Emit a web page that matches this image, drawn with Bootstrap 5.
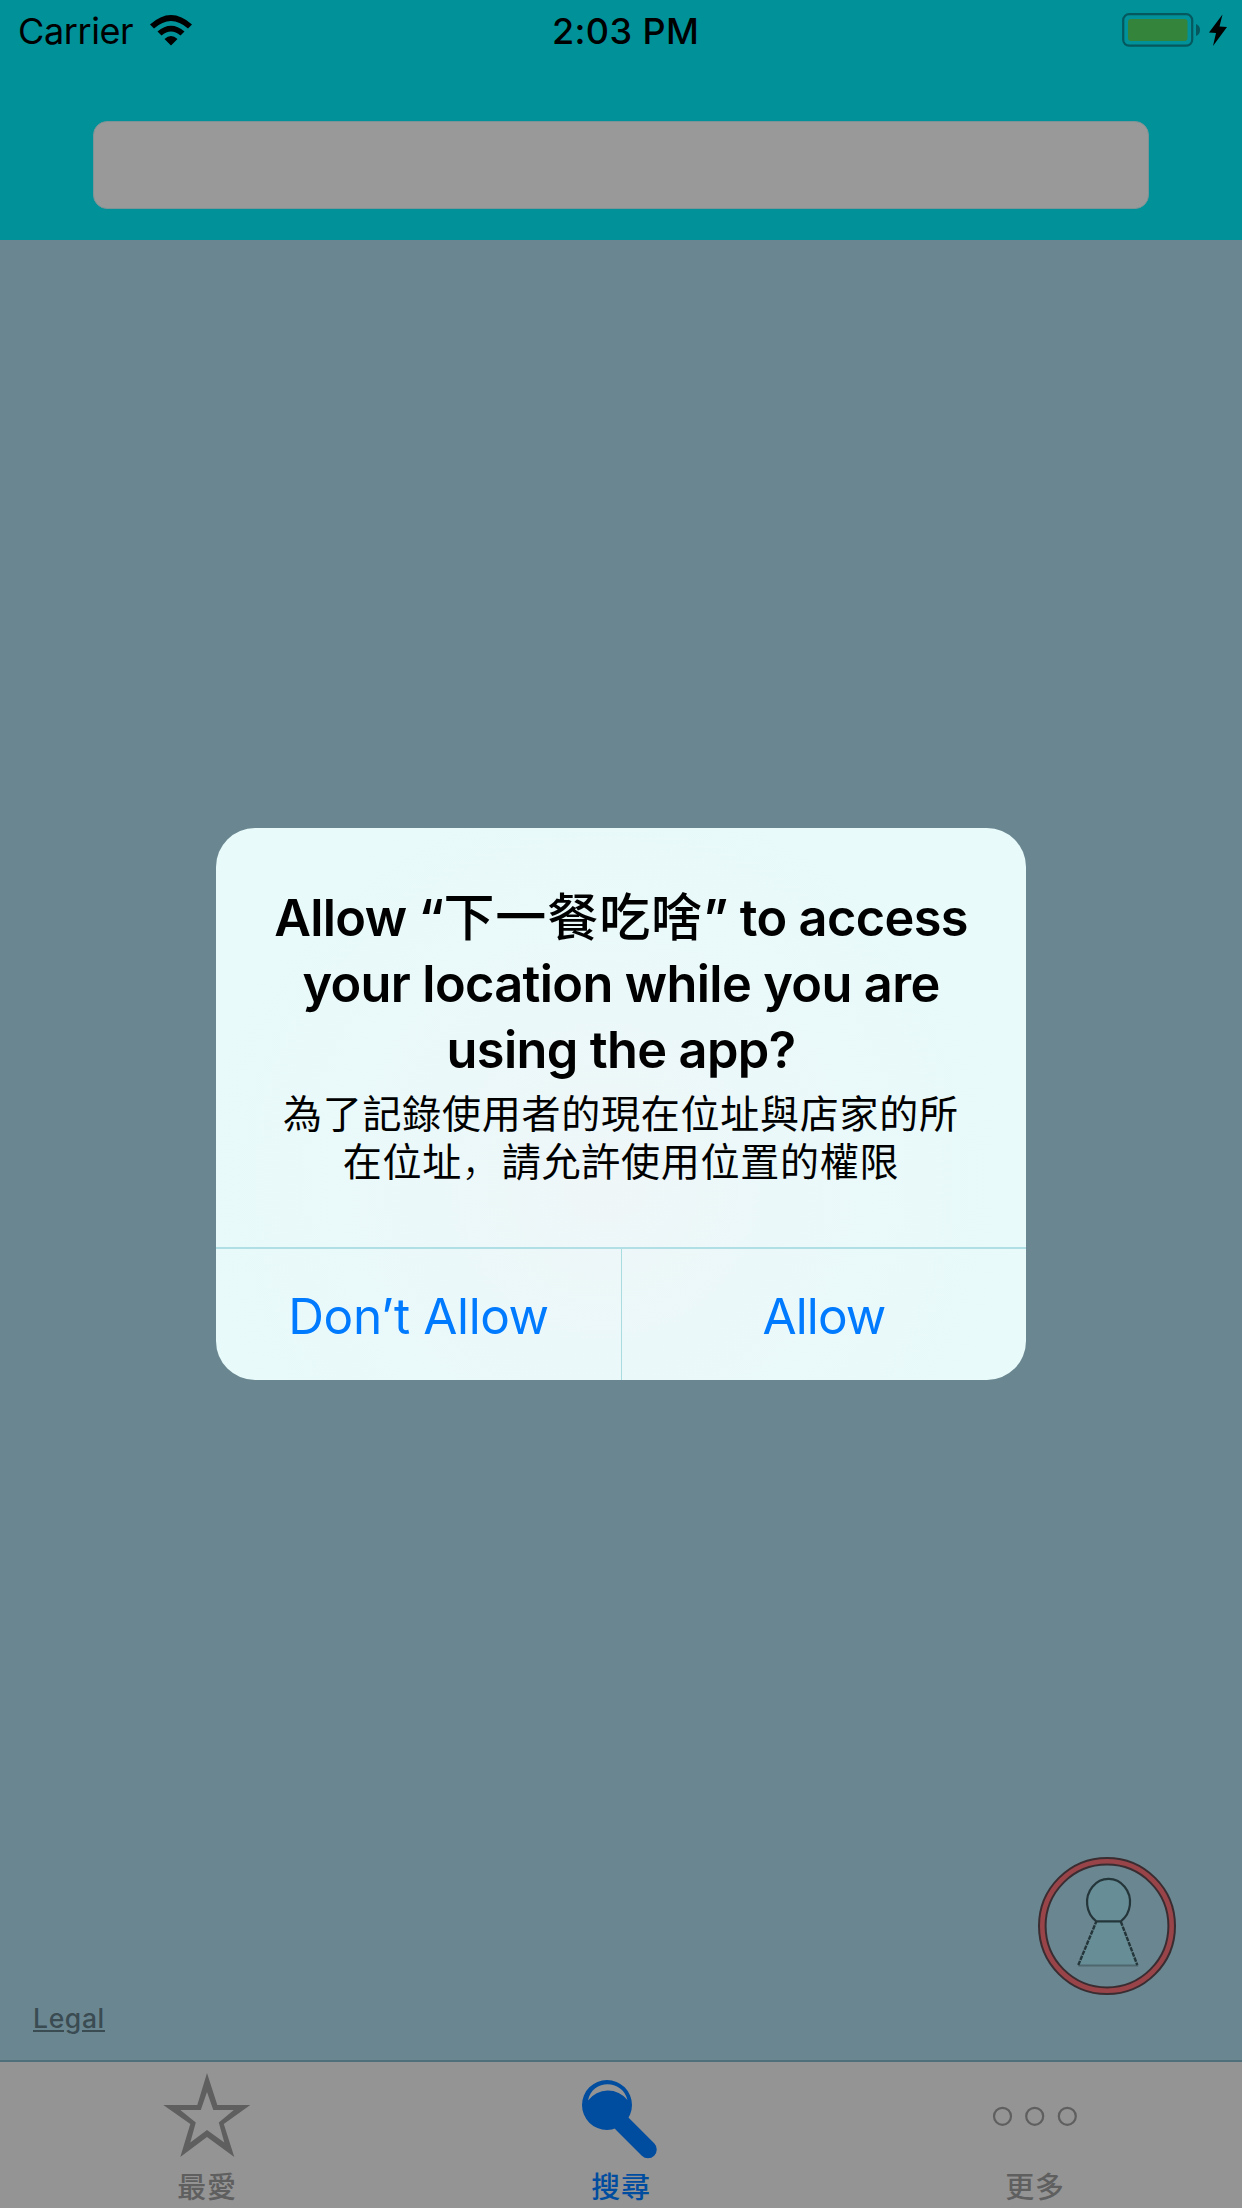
<!DOCTYPE html>
<html lang="zh-Hant">
<head>
<meta charset="utf-8">
<meta name="viewport" content="width=device-width, initial-scale=1">
<title>Location permission</title>
<link href="https://cdn.jsdelivr.net/npm/bootstrap@5.3.0/dist/css/bootstrap.min.css" rel="stylesheet">
<style>
  body { font-family: Inter, "Noto Sans CJK TC", sans-serif; color: #000; background: #6a8791; }
  svg { display: block; }
  .phone { width: 1242px; height: 2208px; }
  .app-top { height: 240px; background: #009199; }
  .status { height: 62px; padding: 0 14px 0 18px; font-size: 36px; line-height: 62px; }
  .status > * { flex: 1 1 0; }
  .status svg { margin-bottom: 2px; }
  .carrier { letter-spacing: -.4px; }
  .wifi { margin-left: 16px; }
  .clock { font-weight: 500; letter-spacing: .4px; padding-left: 5px; }
  .search-field { margin: 59px 93px 0; height: 88px; border-radius: 14px; background: #999; border: 1px solid #7c9496; }
  .map-area { background: #6a8791; }
  .me-button { right: 66px; bottom: 65px; }
  .legal { left: 33px; bottom: 22px; font-size: 26.5px; line-height: 40px; font-weight: 500; letter-spacing: .65px; color: #3a4b52; text-decoration-thickness: 3px; text-underline-offset: 2px; }
  .tabs-bottom { height: 148px; background: #949494; border-top: 2px solid #4f6f7a; color: #5f5f5f; }
  .tab-item { padding-top: 8px; }
  .tab-item.is-on { color: #004da0; }
  .tab-label { font: 500 29px/36px "Noto Sans CJK TC", sans-serif; letter-spacing: .8px; margin-top: 5px; }
  .alert-box { width: 810px; height: 552px; left: 216px; top: 828px; border-radius: 39px; overflow: hidden;
    background: radial-gradient(circle 420px at 48% 64%, #eff6f8 0, #ebf8f9 40%, #e8fafa 100%); }
  .alert-title { font-weight: 600; font-size: 50.5px; line-height: 66px; letter-spacing: -.65px; padding-top: 56px; }
  .alert-title .app-name { font-family: "Noto Sans CJK TC", sans-serif; font-weight: 500; font-size: 51px; letter-spacing: .9px; line-height: 60px; }
  .alert-text { font: 400 39px/48px "Noto Sans CJK TC", sans-serif; letter-spacing: .75px; margin-top: 4px; }
  .alert-text .comma { font-family: "Noto Sans CJK SC", sans-serif; font-weight: 300; }
  .alert-title div, .alert-text div { white-space: nowrap; }
  .alert-actions { height: 133px; border-top: 2px solid #b0e0e5; }
  .alert-actions button { font-size: 49.5px; letter-spacing: -.4px; color: #007aff; background: none; border: 0; padding: 4px 0 0; }
  .alert-actions button + button { border-left: 1px solid #a9dce0; letter-spacing: -.9px; }
</style>
</head>
<body>
<main class="phone position-relative d-flex flex-column overflow-hidden">
  <header class="app-top">
    <div class="status d-flex align-items-center">
      <div class="d-flex align-items-center">
        <span class="carrier">Carrier</span>
        <svg class="wifi" width="44" height="32" viewBox="149 14 44 32"><path d="M150 24.500Q171 5.500 192 24.500L188 28.500Q171 13.500 154 28.500ZM157.500 31.500Q171 20 184.500 31.500L180.500 35.500Q171 27.500 161.500 35.500ZM164.500 39Q171 33 177.500 39L171 45.500Z"/></svg>
      </div>
      <div class="clock text-center">2:03 PM</div>
      <div class="d-flex justify-content-end">
        <svg width="107" height="36" viewBox="1121 12 107 36"><rect x="1123.200" y="14.200" width="69" height="31.500" rx="6" fill="none" stroke="#04585e" stroke-width="2.200"/><rect x="1128" y="19" width="59.500" height="22" rx="3" fill="#34843c"/><path d="M1196 24Q1200 25.500 1200 30T1196 36Z" fill="#04585e"/><path d="M1222.500 14.500L1209 32.500L1216 33L1213 46L1227 27L1219.500 26.500Z"/></svg>
      </div>
    </div>
    <div class="search-field"></div>
  </header>

  <section class="map-area flex-grow-1 position-relative">
    <a class="legal position-absolute text-decoration-underline">Legal</a>
    <svg class="me-button position-absolute" width="138" height="138" viewBox="1037.700 1857 138 138">
      <circle cx="1106.700" cy="1926" r="64.700" fill="none" stroke="#3a2d32" stroke-width="8.600"/>
      <circle cx="1106.700" cy="1926" r="64.700" fill="none" stroke="#984449" stroke-width="4.600"/>
      <path d="M1096 1921.500H1120.500L1138 1965.500H1078Z" fill="#678d96"/>
      <path d="M1078 1965.500H1138" stroke="#4e676e" stroke-width="1.800"/>
      <path d="M1078 1965L1096 1921.500M1120.500 1921.500L1137 1965" fill="none" stroke="#25363b" stroke-width="2.400" stroke-dasharray="4.500 1"/>
      <path d="M1096 1921.300H1120.500A21.500 23.300 0 1 0 1096 1921.300Z" fill="#678d96" stroke="#25363b" stroke-width="2.200"/>
    </svg>
  </section>

  <nav class="tabs-bottom d-flex">
    <div class="tab-item col-4 d-flex flex-column align-items-center">
      <svg width="90" height="92" viewBox="161.700 2070 90 92"><path fill="currentColor" fill-rule="evenodd" d="M206.700 2073L217 2105H250L223.500 2124L234 2157L206.700 2137L180 2157L190 2124L163 2105H197ZM206.700 2092L200.500 2110H180L195.500 2122.500L190 2142.500L206.700 2130L224 2142.500L218.500 2122.500L233.500 2110H213Z"/></svg>
      <span class="tab-label">最愛</span>
    </div>
    <div class="tab-item is-on col-4 d-flex flex-column align-items-center">
      <svg width="90" height="92" viewBox="576 2070 90 92"><path d="M622 2123.500L648 2149.500" stroke="currentColor" stroke-width="17.500" stroke-linecap="round"/><path fill="currentColor" fill-rule="evenodd" d="M582 2105A25 25 0 1 1 632 2105A25 25 0 1 1 582 2105ZM588 2100.500A25 25 0 0 1 627.500 2100C622 2078.500 592 2079.500 588 2100.500Z"/></svg>
      <span class="tab-label">搜尋</span>
    </div>
    <div class="tab-item col-4 d-flex flex-column align-items-center">
      <svg width="90" height="92" viewBox="990 2070 90 92" fill="none" stroke="currentColor" stroke-width="2.200"><circle cx="1002.500" cy="2116.300" r="8.500"/><circle cx="1034.700" cy="2116.300" r="8.500"/><circle cx="1067.300" cy="2116.300" r="8.500"/></svg>
      <span class="tab-label">更多</span>
    </div>
  </nav>

  <div class="alert-box position-absolute d-flex flex-column text-center" role="alertdialog">
    <div class="flex-grow-1">
      <div class="alert-title"><div>Allow “<span class="app-name">下一餐吃啥</span>” to access</div><div>your location while you are</div><div>using the app?</div></div>
      <div class="alert-text"><div>為了記錄使用者的現在位址與店家的所</div><div>在位址<span class="comma" lang="zh-Hans">，</span>請允許使用位置的權限</div></div>
    </div>
    <div class="alert-actions d-flex">
      <button class="w-50" type="button">Don’t Allow</button>
      <button class="w-50" type="button">Allow</button>
    </div>
  </div>
</main>
<script src="https://cdn.jsdelivr.net/npm/bootstrap@5.3.0/dist/js/bootstrap.bundle.min.js"></script>
</body>
</html>
